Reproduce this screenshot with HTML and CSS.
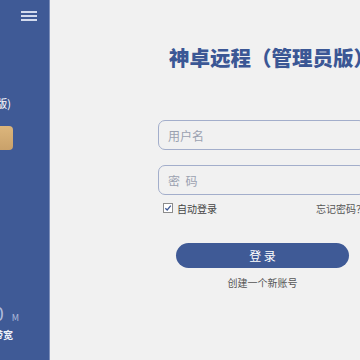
FILE: index.html
```html
<!DOCTYPE html>
<html lang="zh-CN">
<head>
<meta charset="utf-8">
<title>神卓远程（管理员版）</title>
<link rel="stylesheet" href="styles.css">
</head>
<body>
<div class="app">
  <aside class="sidebar">
    <div class="menu-btn"><span></span><span></span><span></span></div>
    <div class="side-inner">
      <div class="side-title">神卓远程(管理员版)</div>
      <div class="gold-btn">立即登录</div>
      <div class="speed"><span class="num">0</span><span class="unit">M</span></div>
      <div class="speed-label">带宽</div>
    </div>
  </aside>
  <main class="main">
    <h1 class="title">神卓远程（管理员版）</h1>
    <form class="form">
      <div class="field"><span class="ph">用户名</span></div>
      <div class="field"><span class="ph">密&nbsp;&nbsp;码</span></div>
      <div class="row">
        <label class="check"><span class="box">
          <svg width="8" height="8" viewBox="0 0 8 8"><path d="M1.3 4.2 L3.2 6 L6.8 1.6" fill="none" stroke="#3f5a96" stroke-width="1.3"/></svg>
        </span>自动登录</label>
        <span class="forgot">忘记密码？</span>
      </div>
      <div class="login">登&nbsp;录</div>
      <div class="create">创建一个新账号</div>
    </form>
  </main>
</div>
</body>
</html>
```
FILE: styles.css
```css
html, body {
  margin: 0;
  padding: 0;
  width: 360px;
  height: 360px;
  overflow: hidden;
  background: #f1f1f1;
  font-family: "Noto Sans CJK SC", "Noto Sans", sans-serif;
}
.app {
  display: flex;
  width: 360px;
  height: 360px;
  overflow: hidden;
}
.sidebar {
  flex: 0 0 49px;
  width: 49px;
  height: 360px;
  background: #3f5a96;
  border-right: 1px solid #7d8fba;
  overflow: hidden;
  position: relative;
}
.menu-btn {
  display: flex;
  flex-direction: column;
  gap: 2px;
  width: 16px;
  margin: 11px 0 0 21px;
}
.menu-btn span {
  display: block;
  height: 2px;
  background: #d3dbee;
}
.side-inner {
  width: 160px;
  margin-left: -147px;
  display: flex;
  flex-direction: column;
  align-items: flex-end;
}
.side-title {
  margin-top: 75px;
  color: #ffffff;
  font-size: 11px;
  line-height: 14px;
  white-space: nowrap;
  margin-right: 2px;
}
.gold-btn {
  margin-top: 16px;
  width: 160px;
  height: 24px;
  border-radius: 4px;
  background: linear-gradient(180deg, #dcb67c, #c9a16a);
  color: #ffffff;
  font-size: 11px;
  line-height: 24px;
  text-align: center;
}
.speed {
  margin-top: 152px;
  margin-right: -6px;
  display: flex;
  align-items: baseline;
  gap: 8px;
  color: #aebbdb;
  white-space: nowrap;
}
.speed .num {
  font-size: 19px;
  line-height: 22px;
}
.speed .unit {
  font-size: 9px;
}
.speed-label {
  margin-top: 5px;
  color: #eef1f8;
  font-size: 10px;
  font-weight: bold;
  line-height: 12px;
}
.main {
  flex: 0 0 424px;
  padding-top: 45px;
  padding-left: 108px;
  box-sizing: border-box;
}
.title {
  margin: 0 0 0 11px;
  font-size: 20.5px;
  line-height: 24px;
  font-weight: 900;
  color: #3b5795;
  white-space: nowrap;
  letter-spacing: 0;
}
.form {
  width: 208px;
  margin-top: 51px;
  display: flex;
  flex-direction: column;
}
.field {
  height: 30px;
  box-sizing: border-box;
  border: 1.5px solid #a3aecb;
  border-radius: 7px;
  display: flex;
  align-items: center;
  padding-left: 9px;
}
.field + .field {
  margin-top: 15px;
}
.ph {
  font-size: 12px;
  color: #9ba1b0;
}
.row {
  display: flex;
  justify-content: space-between;
  align-items: center;
  height: 20px;
  margin-top: 3px;
  padding: 0 0 0 5px;
  font-size: 10px;
  color: #444;
}
.check {
  display: flex;
  align-items: center;
  gap: 4px;
}
.box {
  width: 8px;
  height: 8px;
  border: 1px solid #8c8c8c;
  background: #fff;
  display: flex;
  align-items: center;
  justify-content: center;
}
.box svg { display: block; }
.forgot {
  color: #555;
  white-space: nowrap;
}
.login {
  margin: 25px 0 0 18px;
  width: 173px;
  height: 25px;
  border-radius: 13px;
  background: #3f5a96;
  color: #fff;
  font-size: 12px;
  line-height: 25px;
  text-align: center;
}
.create {
  margin: 8px 0 0 18px;
  width: 173px;
  text-align: center;
  font-size: 10px;
  line-height: 14px;
  color: #555;
}
```
